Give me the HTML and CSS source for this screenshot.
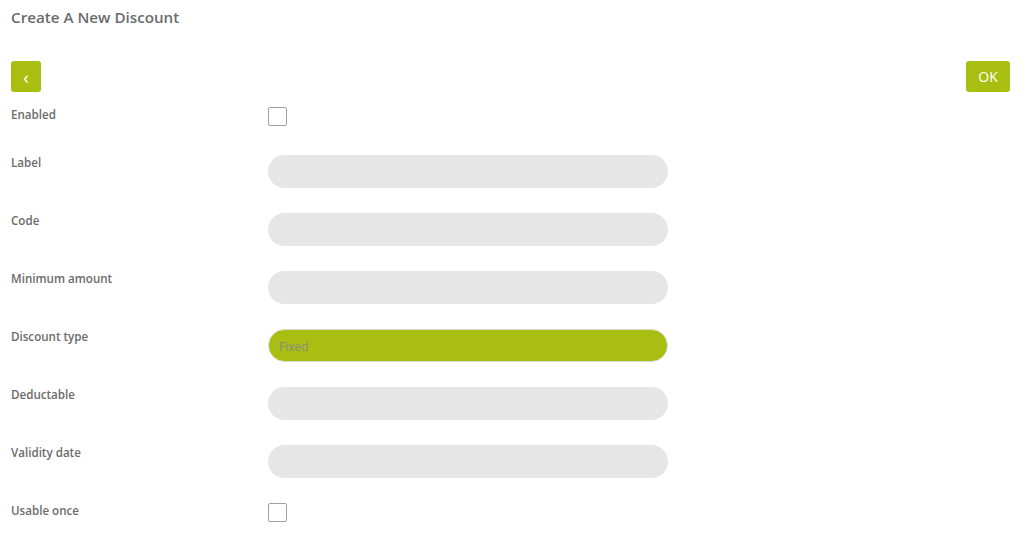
FILE: index.html
```html
<!DOCTYPE html>
<html lang="en">
<head>
    <meta charset="UTF-8">
    <meta name="viewport" content="width=device-width, initial-scale=1.0">
    <title>Create A New Discount</title>
    <link rel="stylesheet" href="styles.css">
</head>
<body>
    <h1>Create A New Discount</h1>

    <!-- toolbar -->
    <div class="toolbar">
        <button class="btn btn-back">&lsaquo;</button>
        <button class="btn btn-ok">OK</button>
    </div>

    <!-- form -->
    <form class="discount-form">
        <div class="row row-check">
            <label>Enabled</label>
            <input type="checkbox" class="check">
        </div>
        <div class="row">
            <label>Label</label>
            <input type="text" class="field">
        </div>
        <div class="row">
            <label>Code</label>
            <input type="text" class="field">
        </div>
        <div class="row">
            <label>Minimum amount</label>
            <input type="text" class="field">
        </div>
        <div class="row">
            <label>Discount type</label>
            <div class="field field-select">Fixed</div>
        </div>
        <div class="row">
            <label>Deductable</label>
            <input type="text" class="field">
        </div>
        <div class="row">
            <label>Validity date</label>
            <input type="text" class="field">
        </div>
        <div class="row row-check">
            <label>Usable once</label>
            <input type="checkbox" class="check">
        </div>
    </form>
</body>
</html>
```

FILE: styles.css
```css
body {
    margin: 0;
    padding: 0 14px 0 11px;
    font-family: "Open Sans", sans-serif;
    color: #666;
    background-color: #fff;
}

h1 {
    margin: 0;
    padding-top: 8px;
    font-size: 15.2px;
    font-weight: 600;
    line-height: 18px;
    color: #6b6b6b;
}

/* toolbar */
.toolbar {
    display: flex;
    justify-content: space-between;
    margin-top: 35px;
}
.btn {
    height: 31px;
    border: none;
    border-radius: 3px;
    background-color: #a8bf12;
    color: #fff;
    font-family: inherit;
    font-size: 14px;
    padding: 0;
    cursor: pointer;
}
.btn-back { width: 30px; font-size: 18px; line-height: 28px; }
.btn-ok { width: 44px; }

/* form */
.discount-form { margin-top: 15px; }
.row {
    display: flex;
    align-items: flex-start;
    margin-bottom: 25px;
}
.row-check { min-height: 23px; }
.row label {
    width: 257px;
    flex-shrink: 0;
    font-size: 11.6px;
    font-weight: 600;
    line-height: 16px;
    color: #6b6b6b;
}
.check {
    appearance: none;
    margin: 0;
    width: 19px;
    height: 19px;
    border: 1.5px solid #a0a0a0;
    border-radius: 2px;
    background: #fff;
}
.field {
    box-sizing: border-box;
    width: 400px;
    height: 33px;
    margin: 0;
    border: none;
    border-radius: 17px;
    background-color: #e6e6e6;
    padding: 0 11px;
    font-family: inherit;
    font-size: 12px;
}
.field-select {
    display: flex;
    align-items: center;
    padding-top: 2px;
    background-color: #a8bf12;
    border: 1px solid #dcdcdc;
    color: #888;
    padding-left: 10px;
}
```
